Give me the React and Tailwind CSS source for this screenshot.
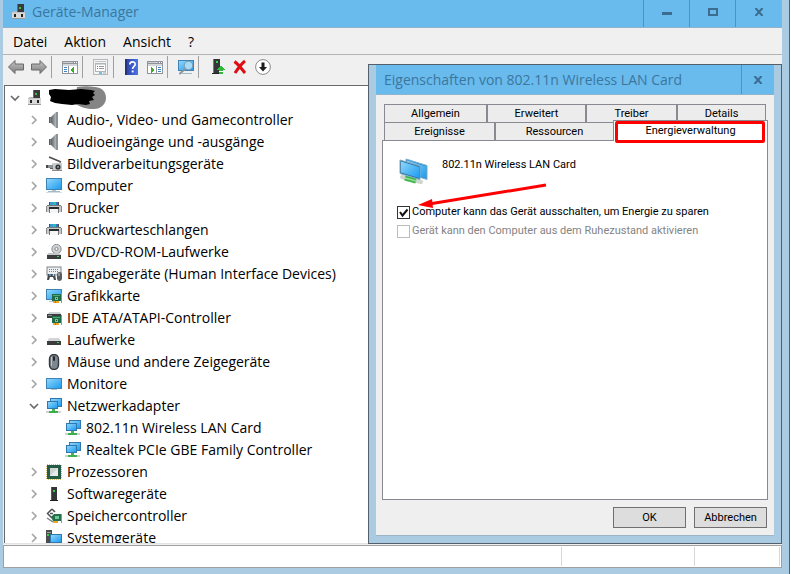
import clsx from 'clsx';

/* ---------- icons ---------- */

function Icon({ children, size = 16, crisp = true, className }) {
  return (
    <svg
      width={size}
      height={size}
      viewBox={`0 0 ${size} ${size}`}
      shapeRendering={crisp ? 'crispEdges' : 'auto'}
      className={clsx('flex-shrink-0', className)}
      aria-hidden="true"
    >
      {children}
    </svg>
  );
}

function Gradients() {
  return (
    <svg width="0" height="0" className="absolute" aria-hidden="true">
      <defs>
        <linearGradient id="screen" x1="0" y1="0" x2="1" y2="1">
          <stop offset="0" stopColor="#8fd6fb" />
          <stop offset="1" stopColor="#1e9cf0" />
        </linearGradient>
        <linearGradient id="arrow" x1="0" y1="0" x2="0" y2="1">
          <stop offset="0" stopColor="#c4c4c4" />
          <stop offset="1" stopColor="#7d7d7d" />
        </linearGradient>
        <linearGradient id="metal" x1="0" y1="0" x2="1" y2="0">
          <stop offset="0" stopColor="#5d6266" />
          <stop offset="1" stopColor="#b4babf" />
        </linearGradient>
        <linearGradient id="help" x1="0" y1="0" x2="1" y2="0">
          <stop offset="0" stopColor="#2b3f9e" />
          <stop offset="1" stopColor="#4a74e8" />
        </linearGradient>
      </defs>
    </svg>
  );
}

function DeviceManagerIcon() {
  return (
    <Icon>
      <rect x="6" y="0" width="7" height="9" fill="#3a3a3c" />
      <rect x="6" y="0" width="1" height="9" fill="#6c6c70" />
      <rect x="8" y="3" width="2" height="2" fill="#39c43f" />
      <rect x="2" y="7" width="4" height="2" fill="#b9b9b9" />
      <rect x="1" y="9" width="13" height="6" fill="#d9d9d9" />
      <rect x="1" y="14" width="13" height="1" fill="#9a9a9a" />
      <rect x="1" y="8" width="13" height="1" fill="#c4c4c4" />
      <rect x="3" y="10" width="2" height="3" fill="#222" />
      <rect x="10" y="10" width="2" height="3" fill="#222" />
    </Icon>
  );
}

function SpeakerIcon() {
  return (
    <Icon crisp={false}>
      <path d="M3 5h3v6H3z" fill="#7b8084" />
      <path d="M5 5l5-5v16l-5-5z" fill="url(#metal)" />
      <path d="M10 0h2v16h-2z" fill="#8d9297" />
      <path d="M3 5h1v6H3z" fill="#5a5e61" />
    </Icon>
  );
}

function CameraIcon() {
  return (
    <Icon crisp={false}>
      <path d="M3 1l12 5" stroke="#4a4a4a" strokeWidth="1.4" />
      <path d="M14 5v3" stroke="#777" />
      <rect x="6" y="7" width="10" height="8" fill="#c9ccce" />
      <rect x="6" y="14" width="10" height="1" fill="#8b8b8b" />
      <rect x="1" y="9" width="6" height="3" fill="#8d9194" />
      <rect x="0" y="9" width="2" height="3" fill="#44484b" />
      <rect x="4" y="12" width="3" height="1" fill="#5d5d5d" />
      <circle cx="12" cy="11" r="2.6" fill="#333" />
      <circle cx="12" cy="11" r="1.1" fill="#7fa3a3" />
    </Icon>
  );
}

function ComputerIcon() {
  return (
    <Icon>
      <rect x="0" y="0" width="16" height="12" fill="#3f83b5" />
      <rect x="1" y="1" width="14" height="10" fill="url(#screen)" />
      <rect x="6" y="12" width="4" height="1" fill="#b4c2cb" />
      <rect x="2" y="13" width="12" height="1" fill="#a3bac7" />
      <rect x="0" y="14" width="16" height="1" fill="#d5dfe5" />
    </Icon>
  );
}

function MonitorIcon() {
  return (
    <Icon>
      <rect x="0" y="2" width="16" height="11" fill="#3f83b5" />
      <rect x="1" y="3" width="14" height="9" fill="url(#screen)" />
      <rect x="5" y="13" width="6" height="1" fill="#b4c2cb" />
    </Icon>
  );
}

function PrinterIcon() {
  return (
    <Icon>
      <rect x="3" y="2" width="10" height="3" fill="#4a4d50" />
      <rect x="4" y="2" width="3" height="3" fill="#3a9ad6" />
      <rect x="7" y="2" width="3" height="3" fill="#26c0a4" />
      <rect x="10" y="2" width="2" height="3" fill="#3a6fd0" />
      <rect x="1" y="5" width="14" height="2" fill="#75797c" />
      <rect x="0" y="6" width="16" height="6" fill="#c5c8ca" />
      <rect x="0" y="6" width="1" height="6" fill="#85898c" />
      <rect x="15" y="6" width="1" height="6" fill="#85898c" />
      <rect x="3" y="7" width="10" height="3" fill="#292b2d" />
      <rect x="4" y="9" width="8" height="4" fill="#f6f6f6" />
      <rect x="3" y="9" width="1" height="4" fill="#777" />
      <rect x="12" y="9" width="1" height="4" fill="#777" />
    </Icon>
  );
}

function DiscIcon() {
  return (
    <Icon crisp={false}>
      <circle cx="10.5" cy="5" r="4.6" fill="#d2d6d8" stroke="#85898c" />
      <circle cx="10.5" cy="5" r="1.6" fill="#f5f5f5" stroke="#85898c" />
      <path d="M2 9h11l2 2H1z" fill="#c4c6c8" />
      <rect x="1" y="11" width="14" height="4" fill="#3a3c3e" />
      <rect x="11" y="12" width="2" height="1" fill="#45d04a" />
    </Icon>
  );
}

function InputIcon() {
  return (
    <Icon crisp={false}>
      <rect x="1" y="1" width="14" height="8" fill="#eceff1" stroke="#7f868b" />
      <path d="M3 3.5h10M3 5.5h10" stroke="#7f868b" strokeDasharray="1 1" />
      <path d="M1 14l1-6h7l1 6H8l-1-3H4l-1 3z" fill="#42484d" />
      <circle cx="4" cy="9" r="1" fill="#5aa9e6" />
      <circle cx="7.5" cy="9" r="1" fill="#cfd6da" />
      <rect x="11" y="6" width="5" height="9" rx="2.4" fill="#575d62" />
      <path d="M13 7v3" stroke="#c5cacd" />
    </Icon>
  );
}

function CardShape() {
  return (
    <>
      <rect x="6" y="6" width="9" height="7" fill="#1f6b45" />
      <rect x="15" y="5" width="1" height="10" fill="#8f9699" />
      <rect x="7" y="7" width="7" height="1" fill="#4fa877" />
      <rect x="9" y="9" width="3" height="3" fill="#6fc79a" />
      <rect x="10" y="10" width="1" height="1" fill="#173f2c" />
      <rect x="7" y="13" width="6" height="2" fill="#f0a823" />
      <rect x="9" y="13" width="1" height="2" fill="#c07a10" />
    </>
  );
}

function GraphicsIcon() {
  return (
    <Icon>
      <rect x="0" y="1" width="16" height="11" fill="#3f83b5" />
      <rect x="1" y="2" width="14" height="9" fill="url(#screen)" />
      <rect x="3" y="13" width="4" height="1" fill="#b4c2cb" />
      <CardShape />
    </Icon>
  );
}

function IdeIcon() {
  return (
    <Icon>
      <path d="M3 2h10l2 2H1z" fill="#cfd2d4" />
      <rect x="1" y="4" width="14" height="4" fill="#3b3e40" />
      <rect x="2" y="5" width="4" height="1" fill="#8a8d8f" />
      <CardShape />
    </Icon>
  );
}

function DriveIcon() {
  return (
    <Icon>
      <path d="M3 6h10l2 4H1z" fill="#d3d5d7" />
      <rect x="1" y="9" width="14" height="4" fill="#3a3c3e" />
      <rect x="11" y="10" width="2" height="1" fill="#45d04a" />
    </Icon>
  );
}

function MouseIcon() {
  return (
    <Icon crisp={false}>
      <rect x="3.5" y="0.5" width="9" height="15" rx="4.4" fill="#7e878f" stroke="#33383c" strokeWidth="1.4" />
      <path d="M5.5 3v9" stroke="#b9c2ca" />
      <rect x="7" y="2" width="2" height="5" rx="1" fill="#25282b" />
    </Icon>
  );
}

function NetworkIcon() {
  return (
    <Icon>
      <rect x="4" y="0" width="12" height="9" fill="#2f77ac" />
      <rect x="5" y="1" width="10" height="7" fill="url(#screen)" />
      <rect x="1" y="3" width="11" height="8" fill="#2f77ac" />
      <rect x="2" y="4" width="9" height="6" fill="url(#screen)" />
      <rect x="6" y="11" width="3" height="2" fill="#49b455" />
      <rect x="3" y="13" width="9" height="2" fill="#3fae4c" />
      <rect x="0" y="13" width="3" height="2" fill="#cfd6d2" />
      <rect x="12" y="13" width="3" height="2" fill="#cfd6d2" />
    </Icon>
  );
}

function CpuIcon() {
  return (
    <Icon crisp={false}>
      <rect x="1" y="1" width="14" height="14" fill="none" stroke="#c9a545" strokeWidth="1.6" strokeDasharray="1 1" />
      <rect x="1" y="1" width="14" height="14" fill="#255c46" />
      <rect x="4" y="4" width="8" height="8" fill="#cfd4d2" />
      <path d="M4 12l8-8v8z" fill="#e9ebea" />
    </Icon>
  );
}

function SoftwareIcon() {
  return (
    <Icon>
      <rect x="5" y="1" width="6" height="13" fill="#343537" />
      <rect x="5" y="1" width="1" height="13" fill="#58595b" />
      <rect x="7" y="4" width="2" height="2" fill="#39d043" />
      <rect x="4" y="14" width="8" height="1" fill="#1c1c1d" />
    </Icon>
  );
}

function StorageIcon() {
  return (
    <Icon crisp={false}>
      <path d="M6 1L1.5 5.5 6 10M4 5.5h3" fill="none" stroke="#4d5154" strokeWidth="1.5" />
      <path d="M6 1l3 3" stroke="#4d5154" strokeWidth="1.5" />
      <path d="M1 10l6 4" stroke="#7c8083" strokeWidth="1.5" />
      <path d="M5 9l3-3h7v7H7z" fill="#26704b" />
      <rect x="15" y="6" width="1" height="9" fill="#8f9699" />
      <rect x="9" y="8" width="4" height="3" fill="#6fc79a" />
      <rect x="7" y="13" width="5" height="2" fill="#f0a823" />
    </Icon>
  );
}

function SystemIcon() {
  return (
    <Icon>
      <rect x="0" y="0" width="6" height="14" fill="#4a4d50" />
      <rect x="1" y="2" width="4" height="1" fill="#9ba0a3" />
      <rect x="1" y="4" width="2" height="2" fill="#39d043" />
      <rect x="4" y="4" width="12" height="9" fill="#2f77ac" />
      <rect x="5" y="5" width="10" height="7" fill="url(#screen)" />
      <rect x="7" y="13" width="6" height="1" fill="#b4c2cb" />
    </Icon>
  );
}

function BackIcon({ className }) {
  return (
    <Icon crisp={false} className={className}>
      <path d="M.5 8L7 1.500V5h8.500v6H7v3.500z" fill="url(#arrow)" stroke="#6a6a6a" strokeLinejoin="round" />
    </Icon>
  );
}

function PaneIcon({ flipped }) {
  return (
    <Icon>
      <rect x="0" y="2" width="16" height="13" fill="#8e9499" />
      <rect x="1" y="5" width="14" height="9" fill="#fff" />
      <rect x="1" y="3" width="10" height="1" fill="#c9ced2" />
      <rect x="12" y="3" width="1" height="1" fill="#fff" />
      <rect x="14" y="3" width="1" height="1" fill="#fff" />
      <rect x="1" y="5" width="14" height="2" fill="#d3d7da" />
      <g transform={flipped ? 'translate(16 0) scale(-1 1)' : undefined}>
        <rect x="6" y="7" width="1" height="7" fill="#8e9499" />
        <rect x="2" y="8" width="3" height="1" fill="#3d86c6" />
        <rect x="2" y="10" width="3" height="1" fill="#3d86c6" />
        <rect x="2" y="12" width="3" height="1" fill="#3d86c6" />
        <path d="M12 8v6l-4-3z" fill="#41a829" />
      </g>
    </Icon>
  );
}

function PropertiesIcon() {
  return (
    <Icon>
      <rect x="0" y="0" width="15" height="16" fill="#b4b8bb" />
      <rect x="1" y="1" width="13" height="14" fill="#f4f4f4" />
      <rect x="2" y="2" width="11" height="1" fill="#c3c6c8" />
      <rect x="2" y="4" width="11" height="9" fill="#b0b5b8" />
      <rect x="3" y="5" width="9" height="7" fill="#fff" />
      <rect x="3" y="5" width="9" height="1" fill="#d3d7da" />
      <rect x="4" y="7" width="1" height="1" fill="#3d86c6" />
      <rect x="6" y="7" width="5" height="1" fill="#999" />
      <rect x="4" y="9" width="1" height="1" fill="#3d86c6" />
      <rect x="6" y="9" width="5" height="1" fill="#999" />
      <rect x="6" y="13" width="3" height="2" fill="#6fc3ea" />
      <rect x="10" y="13" width="3" height="2" fill="#c9ced2" />
    </Icon>
  );
}

function HelpIcon() {
  return (
    <Icon crisp={false}>
      <rect x="1" y="0" width="13" height="16" fill="url(#help)" />
      <rect x="1" y="0" width="2" height="16" fill="#24347f" />
      <path d="M5.800 5.500c0-3.500 5.400-3.500 5.400-.3 0 2.200-2.600 2.100-2.600 4.700" fill="none" stroke="#fff" strokeWidth="1.600" />
      <rect x="7.700" y="11.500" width="1.900" height="1.900" fill="#fff" />
    </Icon>
  );
}

function ScanIcon() {
  return (
    <Icon crisp={false}>
      <rect x="0" y="1" width="16" height="11" fill="#3f83b5" />
      <rect x="1" y="2" width="14" height="9" fill="url(#screen)" />
      <rect x="4" y="14" width="10" height="1" fill="#a3bac7" />
      <path d="M7 10l-5 4.500" stroke="#8b959c" strokeWidth="2" strokeLinecap="round" />
      <circle cx="10.500" cy="6.500" r="4.200" fill="#a5dbfa" stroke="#8399a6" />
    </Icon>
  );
}

function UpdateDriverIcon() {
  return (
    <Icon>
      <rect x="4" y="0" width="7" height="14" fill="#343537" />
      <rect x="4" y="0" width="1" height="14" fill="#77787a" />
      <rect x="7" y="2" width="2" height="2" fill="#39d043" />
      <rect x="3" y="14" width="7" height="1" fill="#222" />
      <path d="M12 6l4 5h-2v1h-4v-1H8z" fill="#2fb83a" />
      <rect x="10" y="12" width="4" height="1" fill="#fff" />
      <rect x="10" y="13" width="4" height="2" fill="#2fb83a" />
    </Icon>
  );
}

function RemoveIcon() {
  return (
    <Icon crisp={false}>
      <path d="M2.500 2.500c4 3 7 7 10.500 11.500M13 2C9 5 6 9.500 3 14" fill="none" stroke="#df0d12" strokeWidth="3" />
    </Icon>
  );
}

function DisableIcon() {
  return (
    <Icon crisp={false}>
      <circle cx="8" cy="8" r="7.400" fill="#fff" stroke="#8b8b8b" />
      <path d="M6.500 3.500h3V8H12l-4 4.500L4 8h2.500z" fill="#1d1d1d" />
    </Icon>
  );
}

function AdapterIcon() {
  return (
    <svg width="32" height="32" viewBox="0 0 32 32" className="flex-shrink-0" aria-hidden="true">
      <path d="M9 5l21 6.500v14L9 19z" fill="#2f8fd0" stroke="#7fb0cd" />
      <path d="M10 6.500l19 6v11.500l-19-6z" fill="url(#screen)" />
      <path d="M5 23l19 5" stroke="#cdd6cf" strokeWidth="4" strokeLinecap="round" />
      <path d="M8 24l11 3" stroke="#42b44d" strokeWidth="5" />
      <path d="M8 24l11 3" stroke="#8fe08f" strokeWidth="1.500" />
      <path d="M3 6l20 6v13.500l-20-6z" fill="#26709f" stroke="#7fa9c2" />
      <path d="M4 7.500l18 5.400v11l-18-5.400z" fill="url(#screen)" />
    </svg>
  );
}

function Chevron({ open }) {
  return (
    <svg width="10" height="10" viewBox="0 0 10 10" className="flex-shrink-0" aria-hidden="true">
      <path
        d={open ? 'M1 3l4 4 4-4' : 'M3 1l4 4-4 4'}
        fill="none"
        stroke={open ? '#6b6b6b' : '#a6a6a6'}
        strokeWidth="1.700"
      />
    </svg>
  );
}

/* ---------- data ---------- */

const MENU = ['Datei', 'Aktion', 'Ansicht', '?'];

const TOOLBAR = [
  [
    { label: 'Zurück', icon: <BackIcon /> },
    { label: 'Vorwärts', icon: <BackIcon className="-scale-x-100" /> },
  ],
  [{ label: 'Konsolenstruktur', icon: <PaneIcon /> }],
  [{ label: 'Eigenschaften', icon: <PropertiesIcon /> }],
  [
    { label: 'Hilfe', icon: <HelpIcon /> },
    { label: 'Aktionsbereich', icon: <PaneIcon flipped /> },
  ],
  [{ label: 'Nach geänderter Hardware suchen', icon: <ScanIcon /> }],
  [
    { label: 'Treiber aktualisieren', icon: <UpdateDriverIcon /> },
    { label: 'Deinstallieren', icon: <RemoveIcon /> },
    { label: 'Deaktivieren', icon: <DisableIcon /> },
  ],
];

const DEVICES = [
  { name: 'Audio-, Video- und Gamecontroller', icon: SpeakerIcon },
  { name: 'Audioeingänge und -ausgänge', icon: SpeakerIcon },
  { name: 'Bildverarbeitungsgeräte', icon: CameraIcon },
  { name: 'Computer', icon: ComputerIcon },
  { name: 'Drucker', icon: PrinterIcon },
  { name: 'Druckwarteschlangen', icon: PrinterIcon },
  { name: 'DVD/CD-ROM-Laufwerke', icon: DiscIcon },
  { name: 'Eingabegeräte (Human Interface Devices)', icon: InputIcon },
  { name: 'Grafikkarte', icon: GraphicsIcon },
  { name: 'IDE ATA/ATAPI-Controller', icon: IdeIcon },
  { name: 'Laufwerke', icon: DriveIcon },
  { name: 'Mäuse und andere Zeigegeräte', icon: MouseIcon },
  { name: 'Monitore', icon: MonitorIcon },
  {
    name: 'Netzwerkadapter',
    icon: NetworkIcon,
    children: ['802.11n Wireless LAN Card', 'Realtek PCIe GBE Family Controller'],
  },
  { name: 'Prozessoren', icon: CpuIcon },
  { name: 'Softwaregeräte', icon: SoftwareIcon },
  { name: 'Speichercontroller', icon: StorageIcon },
  { name: 'Systemgeräte', icon: SystemIcon },
];

/* ---------- main window ---------- */

function CaptionButton({ label, children }) {
  return (
    <button
      type="button"
      aria-label={label}
      className="flex w-[46px] items-center justify-center border-l border-[#5590bb] pb-1"
    >
      {children}
    </button>
  );
}

function CloseGlyph() {
  return (
    <svg width="10" height="8" viewBox="0 0 10 8" aria-hidden="true">
      <path d="M1.500 0l7 8M8.500 0l-7 8" stroke="#3c6c8f" strokeWidth="2" />
    </svg>
  );
}

function TitleBar() {
  return (
    <header className="flex h-7 flex-shrink-0 border-r border-b border-[#8fb3cb] bg-[#69bbee]">
      <div className="flex flex-1 items-center gap-[5px] pl-2 pb-1">
        <DeviceManagerIcon />
        <h1 className="text-[14px] text-[#3c769d]">Geräte-Manager</h1>
      </div>
      <CaptionButton label="Minimieren">
        <span className="mt-1 h-[3px] w-[10px] bg-[#3c6c8f]" />
      </CaptionButton>
      <CaptionButton label="Maximieren">
        <span className="h-2 w-[10px] border-2 border-[#3c6c8f]" />
      </CaptionButton>
      <CaptionButton label="Schließen">
        <CloseGlyph />
      </CaptionButton>
    </header>
  );
}

function Toolbar() {
  return (
    <div className="flex h-[30px] flex-shrink-0 pl-px pb-[6px]">
      {TOOLBAR.map((group, i) => (
        <div key={i} className="flex items-center">
          {i > 0 && <span className="mr-[6px] ml-px h-[22px] w-px bg-[#a0a0a0]" />}
          {group.map((item) => (
            <button
              key={item.label}
              type="button"
              aria-label={item.label}
              className="flex h-6 w-[23px] items-center justify-center"
            >
              {item.icon}
            </button>
          ))}
        </div>
      ))}
    </div>
  );
}

function Scribble() {
  return (
    <svg width="60" height="26" viewBox="0 0 60 26" className="-my-1 flex-shrink-0" aria-hidden="true">
      <path d="M30 2C36 1 42 1 48 2c8 1 11 5 11 11s-5 11-12 11c-8 0-13-2-19-5z" fill="#858585" />
      <path
        d="M2 5l6-1 14 1 12-1 10 1 4 1-2 2 2 2-3 2 2 3-5 1 1 3-4 1-8-1-6 1-10-1-7-1-5-2 1-4-2-3z"
        fill="#000"
      />
    </svg>
  );
}

function DeviceTree() {
  return (
    <ul className="min-h-0 flex-1 overflow-hidden border-t border-l border-[#696969] bg-white pt-px text-[14px] leading-[22px] text-black">
      <li>
        <div className="flex h-[22px] items-center pl-[5px]">
          <Chevron open />
          <span className="pl-[7px]">
            <DeviceManagerIcon />
          </span>
          <span className="pl-1">
            <Scribble />
          </span>
        </div>
        <ul>
          {DEVICES.map(({ name, icon: DeviceIcon, children }) => (
            <li key={name}>
              <div className="flex h-[22px] items-center pl-6">
                <Chevron open={Boolean(children)} />
                <span className="pr-[5px] pl-[7px]">
                  <DeviceIcon />
                </span>
                {name}
              </div>
              {children && (
                <ul>
                  {children.map((child) => (
                    <li key={child} className="flex h-[22px] items-center gap-[5px] pl-[60px]">
                      <NetworkIcon />
                      {child}
                    </li>
                  ))}
                </ul>
              )}
            </li>
          ))}
        </ul>
      </li>
    </ul>
  );
}

function StatusBar() {
  return (
    <footer className="mt-px flex h-[23px] flex-shrink-0 justify-end border border-[#a0a0a0] bg-white py-px pr-px">
      <span className="w-[133px] border-l border-[#d7d7d7]" />
      <span className="w-[86px] border-x border-[#d7d7d7]" />
    </footer>
  );
}

/* ---------- properties dialog ---------- */

function Tab({ children, className, selected = false }) {
  return (
    <button
      type="button"
      role="tab"
      aria-selected={selected}
      className={clsx(
        'border-[#898992] text-center text-[11px]',
        selected ? 'bg-white' : 'bg-[#ececec]',
        className
      )}
    >
      {children}
    </button>
  );
}

function PropertyTabs() {
  return (
    <div role="tablist" className="px-[2px]">
      <div className="flex h-[18px] border-t border-r border-[#898992] leading-[18px]">
        <Tab className="w-[102px] border-l">Allgemein</Tab>
        <Tab className="w-[99px] border-l-2">Erweitert</Tab>
        <Tab className="w-[91px] border-l-2">Treiber</Tab>
        <Tab className="flex-1 border-l-2">Details</Tab>
      </div>
      <div className="flex h-[18px] leading-[18px]">
        <Tab className="w-[110px] border-t border-l">Ereignisse</Tab>
        <Tab className="w-[119px] border-t border-l-2">Ressourcen</Tab>
        <Tab selected className="relative z-10 -mt-[2px] -mr-[2px] -mb-px flex-1 border-x border-t">
          Energieverwaltung
          <span className="absolute inset-x-0 top-0 mr-[2px] ml-px -bottom-[2px] rounded-[2px] border-[3px] border-[#ff0000]" />
        </Tab>
      </div>
    </div>
  );
}

function CheckBox({ id, label, checked = false, disabled = false }) {
  return (
    <div className="flex h-[19px] items-center gap-[2px]">
      <span className="relative h-[13px] w-[13px]">
        <input
          id={id}
          type="checkbox"
          defaultChecked={checked}
          disabled={disabled}
          className="peer block h-[13px] w-[13px] appearance-none border border-[#333] bg-white disabled:border-[#bcbcbc]"
        />
        <svg
          viewBox="0 0 13 13"
          className="pointer-events-none absolute inset-0 hidden h-[13px] w-[13px] peer-checked:block"
          aria-hidden="true"
        >
          <path d="M3 6l2.500 3.500L10.500 3.500" fill="none" stroke="#111" strokeWidth="2" />
        </svg>
      </span>
      <label htmlFor={id} className={clsx('text-[11px]', disabled ? 'text-[#838383]' : 'text-black')}>
        {label}
      </label>
    </div>
  );
}

function DialogButton({ children }) {
  return (
    <button type="button" className="h-[21px] w-[73px] border border-[#707070] bg-[#dddddd] text-[11px] leading-[19px]">
      {children}
    </button>
  );
}

function PropertiesDialog() {
  return (
    <section
      role="dialog"
      aria-labelledby="dialog-title"
      className="absolute top-16 right-[10px] flex h-[480px] w-[414px] flex-col border border-[#53606c] bg-[#aacbe1] px-[7px] pb-[7px]"
    >
      <header className="flex h-[30px] flex-shrink-0 border-b border-[#8fb3cb] bg-[#69bbee]">
        <h2 id="dialog-title" className="flex-1 pl-2 text-[14px] leading-[29px] text-[#3c769d]">
          Eigenschaften von 802.11n Wireless LAN Card
        </h2>
        <button
          type="button"
          aria-label="Schließen"
          className="flex w-[33px] items-center justify-center border-l border-[#5590bb]"
        >
          <CloseGlyph />
        </button>
      </header>
      <div className="flex min-h-0 flex-1 flex-col border-b border-[#9db6c6] bg-[#efefef] px-[6px] pt-[9px] font-[Roboto,'Liberation_Sans',sans-serif] text-black">
        <PropertyTabs />
        <div role="tabpanel" className="relative flex-1 border border-[#898992] bg-white px-[14px] pt-[13px]">
          <div className="flex gap-[13px]">
            <AdapterIcon />
            <p className="pt-[3px] text-[11px] leading-4">802.11n Wireless LAN Card</p>
          </div>
          <div className="pt-[17px]">
            <CheckBox id="power-off" label="Computer kann das Gerät ausschalten, um Energie zu sparen" checked />
            <CheckBox id="wake" label="Gerät kann den Computer aus dem Ruhezustand aktivieren" disabled />
          </div>
          <svg
            width="132"
            height="28"
            viewBox="0 0 132 28"
            className="pointer-events-none absolute top-[40px] left-[34px]"
            aria-hidden="true"
          >
            <path d="M129 4L12 23" stroke="#ff0000" strokeWidth="3" />
            <path d="M1 24l14-6 1 9z" fill="#ff0000" />
          </svg>
        </div>
        <div className="flex justify-end gap-2 pt-[7px] pr-px pb-[7px]">
          <DialogButton>OK</DialogButton>
          <DialogButton>Abbrechen</DialogButton>
        </div>
      </div>
    </section>
  );
}

export default function App() {
  return (
    <div className="relative h-screen bg-white pr-[2px] font-['Open_Sans','Noto_Sans',sans-serif]">
      <Gradients />
      <main className="flex h-full flex-col border-r border-[#53606c] bg-[#aacbe1] pr-[7px] pb-[6px] pl-[3px]">
        <TitleBar />
        <div className="flex min-h-0 flex-1 flex-col bg-[#f0f0f0]">
          <nav className="flex h-[27px] flex-shrink-0 items-center gap-px border-b border-[#b4b4b4] pl-[2px] text-[14px] text-black">
            {MENU.map((item) => (
              <button key={item} type="button" className="px-2">
                {item}
              </button>
            ))}
          </nav>
          <Toolbar />
          <div className="flex min-h-0 flex-1 flex-col border-b border-[#e3e3e3] pl-px">
            <DeviceTree />
          </div>
          <StatusBar />
        </div>
      </main>
      <PropertiesDialog />
    </div>
  );
}
